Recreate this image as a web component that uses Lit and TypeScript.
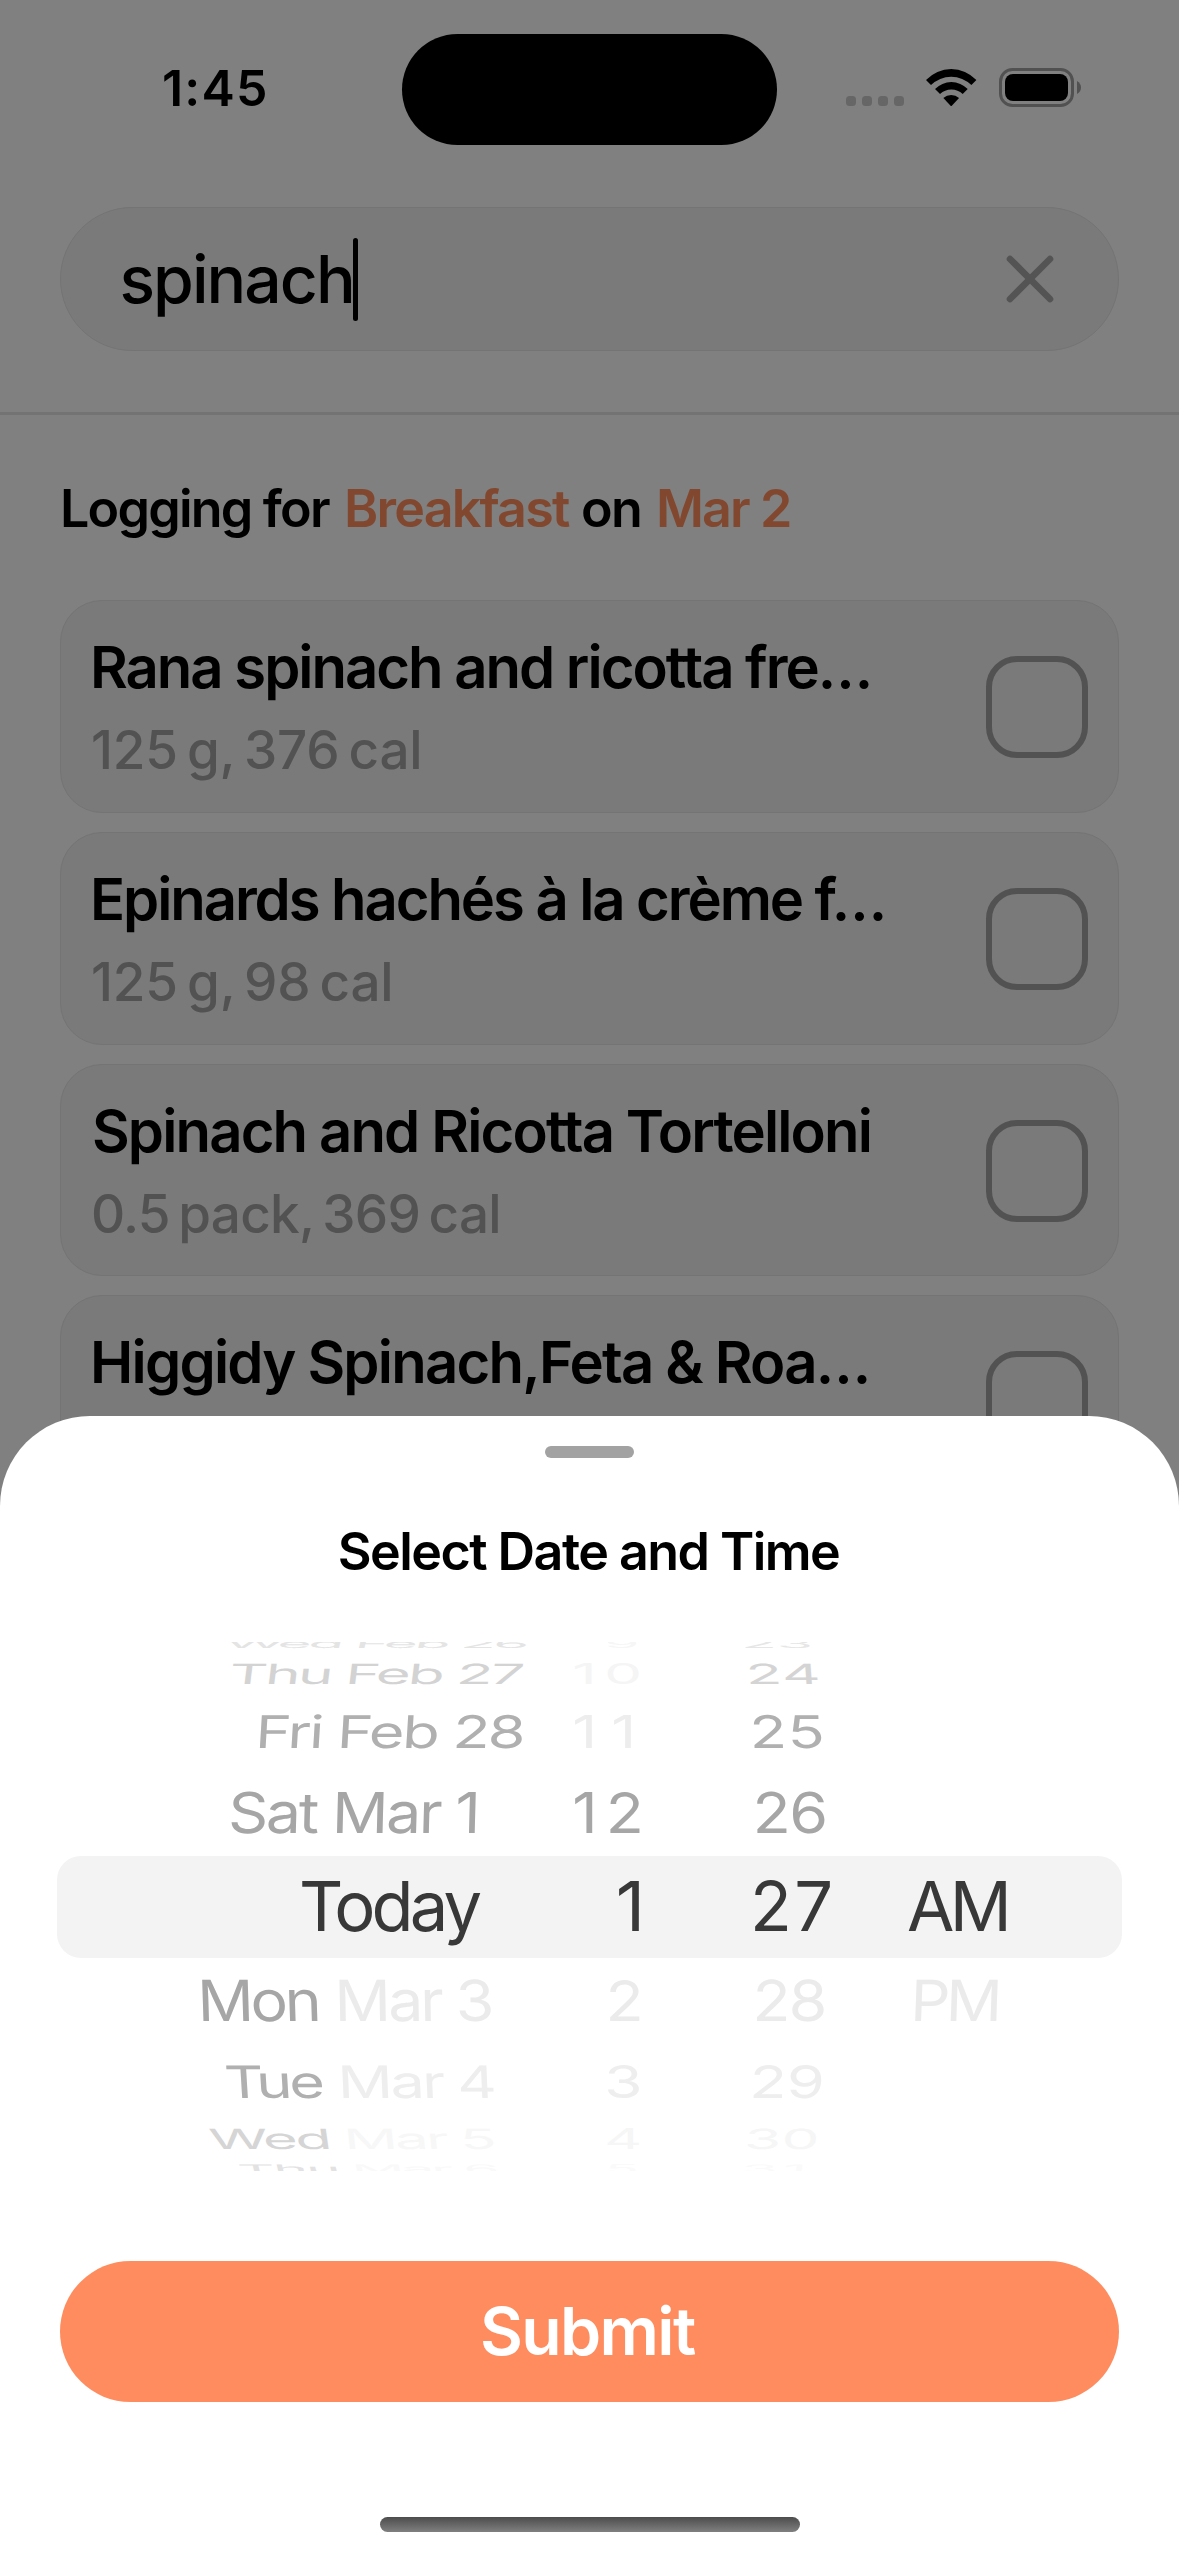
import { LitElement, html, css, svg, nothing } from "lit";
import { customElement, property } from "lit/decorators.js";
import { styleMap } from "lit/directives/style-map.js";

const ctx = document.createElement("canvas").getContext("2d")!;

/** A single line of text whose drawn glyphs span exactly `w` pixels. */
@customElement("fit-label")
class FitLabel extends LitElement {
  @property() text = "";
  @property({ type: Number }) w = 0;
  @property({ type: Number }) size = 52;
  @property({ type: Number }) weight = 400;
  @property({ type: Number }) word = 0; // extra width of each space
  @property({ type: Number }) cap = 0; // target cap height; 0 keeps the font's own
  @property({ type: Number }) stretch = 1; // horizontal scale used together with cap
  @property({ type: Number }) skew = 0;

  static styles = css`
    :host { display: block; flex: none; }
    .box { white-space: pre; }
    .ink { display: inline-block; transform-origin: 0 50%; font-variant-ligatures: none; }
  `;

  render() {
    ctx.font = `${this.weight} ${this.size}px Inter`;
    ctx.letterSpacing = "0.01px";
    const m = ctx.measureText(this.text);
    const spaces = this.text.split(" ").length - 1;
    const ink = m.actualBoundingBoxLeft + m.actualBoundingBoxRight + spaces * this.word;
    const bearing = m.actualBoundingBoxLeft;
    const gaps = this.text.length - 1;
    const style: Record<string, string> = {
      fontSize: `${this.size}px`,
      fontWeight: `${this.weight}`,
      lineHeight: `${this.size * 1.3}px`,
      wordSpacing: `${this.word}px`,
    };
    if (this.cap) {
      const sx = gaps ? this.stretch : this.w / ink;
      const sy = this.cap / (this.size * 0.727);
      if (gaps) style.letterSpacing = `${(this.w / sx - ink) / gaps}px`;
      style.transform = `translateX(${bearing * sx}px) skewX(${this.skew}deg) scale(${sx}, ${sy})`;
    } else {
      style.letterSpacing = `${(this.w - ink) / Math.max(1, gaps)}px`;
      style.transform = `translateX(${bearing}px)`;
    }
    return html`<div class="box" style=${styleMap({ width: `${this.w}px`, height: `${this.size * 1.3}px` })}
      ><span class="ink" style=${styleMap(style)}>${this.text}</span></div>`;
  }
}

interface Food { name: string; nameW: number; detail: string; detailW: number; }

const FOODS: Food[] = [
  { name: "Rana spinach and ricotta fre…", nameW: 775, detail: "125 g, 376 cal", detailW: 327 },
  { name: "Epinards hachés à la crème f…", nameW: 789, detail: "125 g, 98 cal", detailW: 298 },
  { name: "Spinach and Ricotta Tortelloni", nameW: 776, detail: "0.5 pack, 369 cal", detailW: 406 },
  { name: "Higgidy Spinach,Feta & Roa…", nameW: 773, detail: "", detailW: 0 },
];

@customElement("food-card")
class FoodCard extends LitElement {
  @property({ attribute: false }) food!: Food;

  static styles = css`
    :host { display: block; flex: none; }
    .card {
      box-sizing: border-box; height: 212.67px; padding: 29px 30px 0 32px;
      border: 1px solid #747474; border-radius: 42px; background: #7a7a7a;
      display: flex; align-items: flex-start; justify-content: space-between;
    }
    .texts { display: flex; flex-direction: column; gap: 10.5px; }
    .name { color: #000; padding-left: 1px; }
    .detail { color: #525252; }
    .check { box-sizing: border-box; width: 102px; height: 102px; margin-top: 26px; border: 6px solid #525252; border-radius: 31px; }
  `;

  render() {
    const f = this.food;
    return html`<div class="card">
      <div class="texts">
        <fit-label class="name" .text=${f.name} .w=${f.nameW} .size=${58} .weight=${600}></fit-label>
        ${f.detail
          ? html`<fit-label class="detail" .text=${f.detail} .w=${f.detailW} .size=${53} .weight=${500} .word=${-5}></fit-label>`
          : nothing}
      </div>
      <div class="check"></div>
    </div>`;
  }
}

/** text, left edge, right edge, color, skew */
type Cell = [string, number, number, string, number];
interface WheelRow { center: number; cap: number; stretch: number; cells: Cell[]; }

const WHEEL: WheelRow[] = [
  { center: 2, cap: 8.5, stretch: 0.86, cells: [["Wed Feb 26", 227, 527, "#e4e4e4", -14], ["9", 607.7, 636.4, "#f6f6f6", 0], ["23", 744.7, 809, "#e6e6e6", 8]] },
  { center: 32, cap: 20.3, stretch: 0.88, cells: [["Thu Feb 27", 231.5, 522, "#d3d3d3", -7], ["10", 575, 638.7, "#f5f5f5", 0], ["24", 750, 817, "#d4d4d4", 4]] },
  { center: 89.4, cap: 32.7, stretch: 0.9, cells: [["Fri Feb 28", 260, 523.3, "#b0b0b0", -3.5], ["11", 575, 631, "#ededed", 0], ["25", 754.3, 822, "#b0b0b0", 2]] },
  { center: 170.5, cap: 41, stretch: 0.92, cells: [["Sat Mar 1", 231.3, 476, "#a6a6a6", -1.5], ["12", 575, 639.8, "#a6a6a6", 0], ["26", 757.3, 825.4, "#a6a6a6", 0.7]] },
  { center: 264, cap: 50, stretch: 1.01, cells: [["Today", 302, 481, "#383838", 0], ["1", 618.8, 639, "#383838", 0], ["27", 755.4, 831, "#383838", 0], ["AM", 907.7, 1006, "#383838", 0]] },
  { center: 358.7, cap: 41.3, stretch: 0.92, cells: [["Mon", 202, 316.7, "#a6a6a6", 1.8], ["Mar 3", 338.7, 490.3, "#ebebeb", 1], ["2", 610, 639.5, "#ebebeb", 0], ["28", 757.3, 825, "#ebebeb", -0.7], ["PM", 914.6, 997, "#ebebeb", -2]] },
  { center: 439.7, cap: 32.5, stretch: 0.9, cells: [["Tue", 227, 322.3, "#b0b0b0", 3.5], ["Mar 4", 342.3, 493.3, "#eeeeee", 2.5], ["3", 608.5, 639.5, "#eeeeee", 0], ["29", 754, 822, "#eeeeee", -2]] },
  { center: 497.2, cap: 20.3, stretch: 0.88, cells: [["Wed", 210.3, 328, "#d5d5d5", 8], ["Mar 5", 348.3, 493.7, "#f7f7f7", 6], ["4", 607, 638.7, "#f6f6f6", 0], ["30", 748, 816, "#f6f6f6", -4]] },
  { center: 527, cap: 8.5, stretch: 0.86, cells: [["Thu", 240, 336, "#e2e2e2", 14], ["Mar 6", 356, 496.7, "#f9f9f9", 12], ["5", 609, 636, "#fafafa", 0], ["31", 745.5, 802.5, "#fafafa", -8]] },
];

@customElement("date-wheel")
class DateWheel extends LitElement {
  static styles = css`
    :host { display: block; }
    .picker { display: grid; height: 529px; }
    .band { grid-area: 1 / 1; align-self: center; margin: 1px 57px 0; height: 102px; border-radius: 24px; background: #f3f3f3; }
    .rows { grid-area: 1 / 1; z-index: 1; overflow: hidden; display: flex; flex-direction: column; height: 529px; }
    .row { flex: none; display: flex; align-items: center; }
  `;

  render() {
    let end = 0;
    return html`<div class="picker">
      <div class="band"></div>
      <div class="rows">
        ${WHEEL.map((row) => {
          const height = 2 * (row.center - end);
          end += height;
          let x = 0;
          return html`<div class="row" style=${styleMap({ height: `${height}px` })}>
            ${row.cells.map(([text, left, right, color, skew]) => {
              const gap = left - x;
              x = right;
              return html`<fit-label style=${styleMap({ marginLeft: `${gap}px`, color })}
                .text=${text} .w=${right - left} .size=${68} .weight=${400}
                .cap=${row.cap} .stretch=${row.stretch} .skew=${skew}></fit-label>`;
            })}
          </div>`;
        })}
      </div>
    </div>`;
  }
}

const wifi = svg`
  <path d="M0 33A103 103 0 0 1 151 33L136 48A86 86 0 0 0 15 48Z"/>
  <path d="M27 60A68 68 0 0 1 125 60L110 75A49 49 0 0 0 42 75Z"/>
  <path d="M52 87A35 35 0 0 1 99 87L75.5 112Z"/>`;

@customElement("app-root")
class AppRoot extends LitElement {
  static styles = css`
    :host { display: block; font-family: Inter, "Liberation Sans", sans-serif; }
    .screen { position: relative; width: 1179px; height: 2556px; overflow: hidden; background: #808080; display: flex; flex-direction: column; }
    .status { flex: none; height: 177px; box-sizing: border-box; display: flex; align-items: center; padding-left: 164px; color: #000; }
    .island { flex: none; width: 375px; height: 111px; margin-left: 137px; margin-top: 1px; border-radius: 56px; background: #000; }
    .dots { display: flex; gap: 6px; margin: 25px 0 0 69px; }
    .dot { width: 10px; height: 10px; border-radius: 3.5px; background: #666; }
    .wifi { flex: none; width: 50.4px; height: 37.4px; margin-left: 22.2px; margin-top: -2px; }
    .battery { flex: none; width: 83px; height: 39px; margin-left: 22.5px; margin-top: -2px; }
    .search {
      flex: none; box-sizing: border-box; height: 144px; margin: 30px 60px 0; padding: 0 64px 0 61.5px;
      border: 1px solid #747474; border-radius: 72px; background: #7a7a7a;
      display: flex; align-items: center; color: #000;
    }
    .query { padding-top: 2px; }
    .caret { width: 5px; height: 83px; margin-left: 2px; border-radius: 2.5px; background: #000; }
    .clear { width: 48px; height: 48px; margin-left: auto; }
    .divider { flex: none; height: 3px; margin-top: 61px; background: #737373; }
    .logging { flex: none; box-sizing: border-box; height: 185.3px; padding: 3px 0 0 63px; display: flex; align-items: center; color: #000; }
    .accent { color: #82482f; }
    .g1 { margin-left: 17px; }
    .g2 { margin-left: 13px; }
    .g3 { margin-left: 19px; }
    .cards { flex: none; margin: 0 60px; display: flex; flex-direction: column; gap: 19px; }
    .sheet {
      position: absolute; left: 0; right: 0; bottom: 0; height: 1140px; border-radius: 90px 90px 0 0; background: #fff;
      display: flex; flex-direction: column; align-items: center;
    }
    .handle { flex: none; width: 89px; height: 12px; margin-top: 30px; border-radius: 6px; background: #a2a2a2; }
    .title { box-sizing: border-box; height: 184px; padding-top: 3px; display: flex; align-items: center; color: #000; }
    .wheel { flex: none; width: 1179px; }
    .submit {
      flex: none; box-sizing: border-box; width: 1059px; height: 141px; margin-top: 90px; padding: 1px 0 0; border: 0; border-radius: 71px;
      background: #ff8c5e; color: #fff; font: inherit; display: flex; align-items: center; justify-content: center;
    }
    .home { flex: none; width: 420px; height: 15px; margin-top: 115px; border-radius: 7.5px; background: linear-gradient(#4c4c4c, #808080); }
  `;

  render() {
    const label = (text: string, w: number, size: number, weight: number, cls = "") =>
      html`<fit-label class=${cls || nothing} .text=${text} .w=${w} .size=${size} .weight=${weight}></fit-label>`;
    return html`<div class="screen">
      <div class="status">
        ${label("1:45", 101, 50, 600)}
        <div class="island"></div>
        <div class="dots">${[0, 1, 2, 3].map(() => html`<div class="dot"></div>`)}</div>
        <svg class="wifi" viewBox="0 0 151 112">${wifi}</svg>
        <svg class="battery" viewBox="0 0 83 39">
          <rect x="1.5" y="1.5" width="72" height="36" rx="12" fill="none" stroke="#515151" stroke-width="3" />
          <rect x="6" y="6" width="63" height="27" rx="8" />
          <path d="M78 13Q82 15.5 82 19.5T78 26Z" fill="#515151" />
        </svg>
      </div>
      <div class="search">
        ${label("spinach", 228.5, 66, 450, "query")}
        <div class="caret"></div>
        <svg class="clear" viewBox="0 0 48 48" fill="none" stroke="#545454" stroke-width="6.6" stroke-linecap="round">
          <path d="M4 4L44 44M44 4L4 44" />
        </svg>
      </div>
      <div class="divider"></div>
      <div class="logging">
        ${label("Logging for", 267, 52, 600)}${label("Breakfast", 223, 52, 600, "accent g1")}
        ${label("on", 57, 52, 600, "g2")}${label("Mar 2", 131, 52, 600, "accent g3")}
      </div>
      <div class="cards">${FOODS.map((f) => html`<food-card .food=${f}></food-card>`)}</div>
      <div class="sheet">
        <div class="handle"></div>
        <div class="title">${label("Select Date and Time", 499.5, 52, 600)}</div>
        <date-wheel class="wheel"></date-wheel>
        <button class="submit">${label("Submit", 213, 66, 600)}</button>
        <div class="home"></div>
      </div>
    </div>`;
  }
}
